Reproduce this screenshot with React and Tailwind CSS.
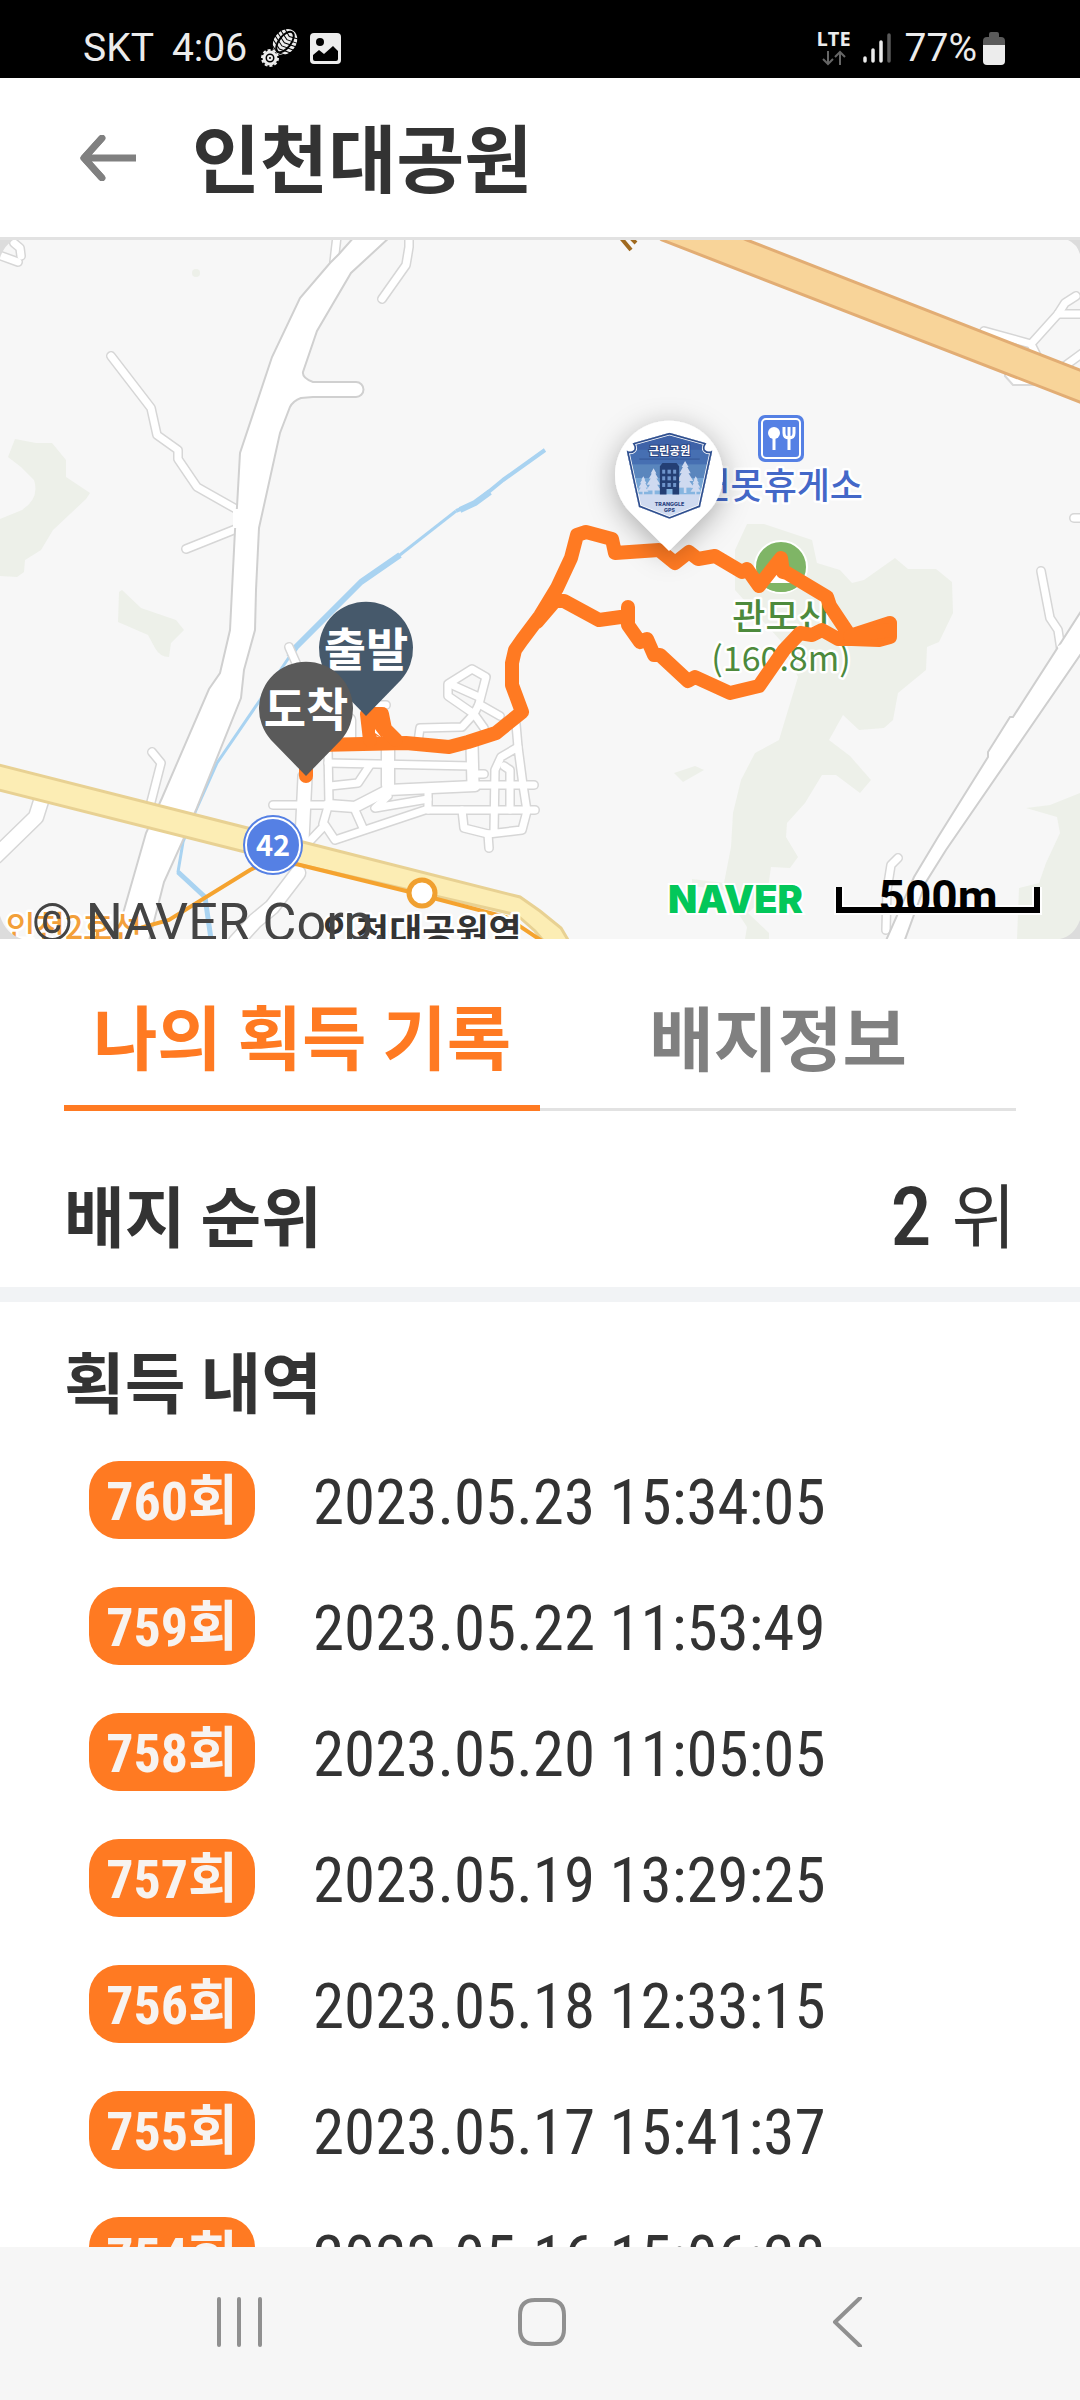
import React from "react";

const ROADS = [
  "M111 356L151 408L157 435L178 450V459L197 487L236 509",
  "M236 529L186 549",
  "M337 236L334 262",
  "M409 236V247L406 265L382 299",
  "M14 243L20 248L21 256",
  "M-4 254L18 262",
  "M152 752L161 763L151 802",
  "M1041 571L1050 618L1058 630L1061 650",
  "M898 858L891 865L887 890L886 930",
  "M984 331L1031 344L1058 314L1065 303L1076 296",
  "M1058 314H1084",
  "M1031 344L1038 358",
  "M1062 368L1084 352",
  "M1074 518H1084",
];

const WIDE_ROADS = [
  "M42 798L36 817L-4 856",
  "M298 873L272 907L255 921L236 942",
];

const STREETS = [
  { d: "M305 777L302 840", w: 13 },
  { d: "M388 745V785", w: 12 },
  { d: "M472 745L473 785", w: 11 },
  { d: "M349 720V738", w: 12 },
  { d: "M328 805L355 807L388 790L475 786", w: 10 },
  { d: "M289 647L300 672", w: 7 },
  { d: "M273 805H328", w: 7 },
  { d: "M328 750L329 803L323 824", w: 7 },
  { d: "M328 763L472 766", w: 7 },
  { d: "M330 786L358 783L370 765", w: 7 },
  { d: "M308 843L325 825L335 840L428 809", w: 7 },
  { d: "M355 810L363 828", w: 7 },
  { d: "M388 796L375 808L428 799", w: 7 },
  { d: "M428 790V810", w: 7 },
  { d: "M428 810H535", w: 7 },
  { d: "M475 785H534", w: 7 },
  { d: "M473 774H484", w: 7 },
  { d: "M462 810L464 828L488 834L522 830L527 811L523 785L518 747L501 757L495 770L494 832", w: 7 },
  { d: "M488 834L489 848", w: 7 },
  { d: "M510 810V770L504 766", w: 7 },
  { d: "M472 669L486 677L479 704L474 714L448 696V684Z", w: 7 },
  { d: "M450 684L479 697", w: 7 },
  { d: "M418 742L420 728L462 727L474 714L484 728", w: 7 },
  { d: "M479 704L500 716", w: 7 },
  { d: "M516 724L518 747", w: 7 },
  { d: "M368 705H386", w: 7 },
];

const ROUTE =
  "M306 776V762L318 745L363 744L406 743L449 747L468 742L496 733L522 712L512 685V663L515 650L522 640L540 616L557 588L571 558L577 535L586 532L612 539L615 553L659 550L675 563L689 552L698 559L715 556L742 572L747 569L759 586L781 558L783 572L787 573L827 597L830 606L850 636L890 623V637L879 640L852 639H838L822 630L812 635L800 633L784 650L759 686L730 693L695 677L688 681L660 655H654L647 639L640 642L628 625V607V616L599 620L564 601H555L537 622";

function RoadSet({ roads }) {
  return (
    <g fill="none" strokeLinecap="round" strokeLinejoin="round">
      {roads.map(({ d, w }) => (
        <path key={d} d={d} stroke="#d6d6d6" strokeWidth={w + 3} />
      ))}
      {roads.map(({ d, w }) => (
        <path key={d} d={d} stroke="#ffffff" strokeWidth={w} />
      ))}
    </g>
  );
}

function Tree({ x, y, s }) {
  return (
    <path
      transform={`translate(${x} ${y}) scale(${s})`}
      d="M0 0L8 14H5L13 28H8L19 46H10L21 62H3V74H-3V62H-21L-10 46H-19L-8 28H-13L-5 14H-8Z"
      fill="#cfdaf0"
    />
  );
}

function ParkBadge() {
  const shield =
    "M209 69L320 100Q308 118 320 124Q330 128 338 122L301 292L209 328L117 292L80 122Q88 128 98 124Q110 118 98 100Z";
  return (
    <svg x="626" y="432" width="87" height="88" viewBox="78 67 262 264">
      <defs>
        <clipPath id="shield">
          <path d={shield} />
        </clipPath>
      </defs>
      <g clipPath="url(#shield)">
        <rect x="70" y="60" width="280" height="280" fill="#3e62a8" />
        <rect x="70" y="120" width="280" height="46" fill="#466fb2" />
        <rect x="70" y="164" width="280" height="40" fill="#5a86bd" />
        <rect x="70" y="204" width="280" height="30" fill="#73a3d3" />
        <rect x="70" y="234" width="280" height="22" fill="#86b5e0" />
        <rect x="70" y="254" width="280" height="90" fill="#cfdaf0" />
        <Tree x={130} y={200} s={0.75} />
        <Tree x={161} y={176} s={1.08} />
        <Tree x={256} y={154} s={1.3} />
        <Tree x={288} y={200} s={0.75} />
        <path d="M180 170L188 160H230L238 170V255H218V238H200V255H180Z" fill="#243f74" />
        <g fill="#6f95cb">
          {[180, 200, 220].map((y) => (
            <React.Fragment key={y}>
              <rect x="187" y={y} width="9" height="12" />
              <rect x="203" y={y} width="10" height="12" />
              <rect x="220" y={y} width="9" height="12" />
            </React.Fragment>
          ))}
        </g>
        <path d="M118 148H300" stroke="#2b4a86" strokeWidth="2" />
        <path d={shield} fill="none" stroke="#ffffff" strokeWidth="15" />
        <path d={shield} fill="none" stroke="#2f4f8f" strokeWidth="10" />
      </g>
      <text
        x="209" y="136" textAnchor="middle" fontSize="34" fontWeight="700"
        fill="#ffffff" stroke="#2b4581" strokeWidth="6" paintOrder="stroke"
        fontFamily="'Noto Sans CJK KR', sans-serif"
      >
        근린공원
      </text>
      <g fontFamily="Inter, sans-serif" fontWeight="800" fontSize="16" fill="#2b4581" textAnchor="middle">
        <text x="209" y="290">TRANGGLE</text>
        <text x="209" y="306">GPS</text>
      </g>
    </svg>
  );
}

function Pin({ x, y, color, label }) {
  return (
    <g transform={`translate(${x} ${y})`}>
      <path d="M0 0L-35 -36A47 47 0 1 1 35 -36Z" fill={color} />
      <text
        y="-50" textAnchor="middle" fontSize="46" fontWeight="700" fill="#ffffff"
        fontFamily="'Noto Sans CJK KR', sans-serif"
      >
        {label}
      </text>
    </g>
  );
}

function RouteMap() {
  return (
    <svg
      viewBox="0 240 1080 699"
      className="block w-full bg-[#f7f7f7]"
      role="img"
      aria-label="인천대공원 이동 경로 지도"
      fontFamily="'Noto Sans CJK KR', sans-serif"
    >
      <defs>
        <filter id="shadow" x="-60%" y="-60%" width="220%" height="220%">
          <feDropShadow dx="0" dy="6" stdDeviation="14" floodColor="#000000" floodOpacity="0.3" />
        </filter>
      </defs>
      <g fill="#edf0e9">
        <path d="M15 439L36 443H52L66 460V477L90 493L86 499L53 530L41 550L25 560L24 572L17 577L0 576V519L22 510Q40 498 34 480L21 467L8 457Z" />
        <path d="M119 592L122 590L141 608L176 620L184 630L171 643L169 657Q160 657 155 648L148 635L118 622Z" />
        <circle cx="196" cy="273" r="4" />
        <path d="M747 524H764L812 540L817 563L840 570L852 583L864 580L895 558L908 569H936L952 582L953 613L939 642L927 647L926 670L898 693L893 720L884 728L859 730L843 715L829 740L850 756L871 780L860 793L836 775H822L805 803L787 823L786 837L798 857L790 868L771 867L767 895L748 913L769 933V939H745L747 927L738 913L724 890L692 886V879L724 883L731 847L733 813L741 780L755 753L779 740L798 677L780 640L735 590V550Z" />
        <path d="M674 773L683 782L704 770L695 766Z" />
        <path d="M1080 793L1050 805L1026 808L1057 817L1060 833L1046 863L1039 883L1019 888L1017 939H1080Z" />
      </g>
      <g fill="none" stroke="#a9d3f1" strokeLinejoin="round">
        <path d="M545 450L503 480L475 503L456 511" strokeWidth="4" />
        <path d="M490 492L475 503L460 510" strokeWidth="6" />
        <path d="M456 511L396 558" strokeWidth="3" />
        <path d="M400 555L361 582L296 647L289 657" strokeWidth="6" />
        <path d="M296 647L269 687L217 763L196 810L183 842L178 872L205 897L211 939" strokeWidth="3" />
        <path d="M178 872L205 897L211 939" strokeWidth="5" />
      </g>
      <RoadSet roads={WIDE_ROADS.map((d) => ({ d, w: 14 }))} />
      <RoadSet roads={STREETS} />
      <RoadSet roads={ROADS.map((d) => ({ d, w: 7 }))} />
      <path
        d="M355 236L339 254L330 263L300 298L272 357L240 453L237 507L235 530L232 590L230 630L220 673L209 689L162 798L146 833L122 917L115 945H148L164 882L184 838L196 810L241 698L244 670L255 630L256 590L259 528L280 433L290 407Q293 401 301 398L313 397H356A7.500 7.500 0 0 0 356 382H313Q302 378 303 372L317 331L351 273L391 236Z"
        fill="#ffffff" stroke="#d0d0d0" strokeWidth="2"
      />
      <path d="M1005 372V376L1013 385H1040Z" fill="#ffffff" stroke="#d9d9d9" strokeWidth="2" />
      <path
        d="M1085 605L1013 717H1010L988 752V757L938 837L914 877L884 945H903L926 882L946 850L1085 648Z"
        fill="#ffffff" stroke="#cfcfcf" strokeWidth="2"
      />
      <path d="M236 509V528M1060 645L1063 650" stroke="#ffffff" strokeWidth="6" />
      <path d="M662 240L655 235H735L747 240L1085 372V404Z" fill="#f8d499" stroke="#e2ad74" strokeWidth="3" />
      <path d="M621 238L631 250M631 238L636 243" stroke="#a06a20" strokeWidth="4" />
      <path
        d="M-5 764L520 897L540 911L561 928L571 945H547L535 931L517 915L241 851L-5 789Z"
        fill="#fcedb4" stroke="#e8d193" strokeWidth="3"
      />
      <path
        d="M140 928L169 920L250 870Q272 858 296 864L410 892L506 917L545 943"
        fill="none" stroke="#f5a32f" strokeWidth="4"
      />
      <circle cx="422" cy="893" r="13" fill="#ffffff" stroke="#f0a030" strokeWidth="5" />

      <g stroke="#ffffff" strokeWidth="5" strokeLinejoin="round" paintOrder="stroke">
        <text x="6" y="939" fontSize="32" fontWeight="500" fill="#f3a03a">인천2호선</text>
        <text x="323" y="945" fontSize="36" fontWeight="700" fill="#333333">인천대공원역</text>
        <text x="863" y="499" textAnchor="end" fontSize="36" fontWeight="500" fill="#4468c8">연못휴게소</text>
        <text x="782" y="630" textAnchor="middle" fontSize="36" fontWeight="500" fill="#4d8a3c">관모산</text>
        <text x="781" y="671" textAnchor="middle" fontSize="34" fill="#4d8a3c">(160.8m)</text>
      </g>

      <circle cx="273" cy="845" r="30" fill="#5580e4" />
      <circle cx="273" cy="845" r="27" fill="none" stroke="#ffffff" strokeWidth="2" />
      <text x="273" y="856" textAnchor="middle" fontSize="29" fontWeight="700" fill="#ffffff">42</text>

      <rect x="758" y="415" width="46" height="47" rx="7" fill="#5580e4" />
      <rect x="762" y="419" width="38" height="39" rx="4" fill="none" stroke="#ffffff" strokeWidth="2" />
      <circle cx="774" cy="433" r="6" fill="#ffffff" />
      <path d="M774 437V450M789 437V450M784 427V433Q784 438 789 438Q794 438 794 433V427M789 427V438" fill="none" stroke="#ffffff" strokeWidth="3" />

      <circle cx="781" cy="567" r="26" fill="#7fb566" stroke="#ffffff" strokeWidth="2" />
      <path d="M781 554L799 583H763Z" fill="#ffffff" />
      <path d="M763 583H799L806 576Q798 592 781 592Q768 592 759 582Z" fill="#7fb566" />

      <g fill="none" stroke="#ff7a22" strokeWidth="14" strokeLinecap="round" strokeLinejoin="round">
        <path d={ROUTE} />
        <path d="M367 714L370 740M373 714H382L385 729L396 740M377 714L381 730M850 636L890 630" />
      </g>
      <path d="M375 729L381 737L375 733Z" fill="#ffffff" />

      <path d="M669 551L630 512A54 54 0 1 1 708 512Z" fill="#ffffff" filter="url(#shadow)" />
      <ParkBadge />
      <Pin x={366} y={716} color="#46596b" label="출발" />
      <Pin x={306} y={776} color="#5a5a5a" label="도착" />

      <text x="32" y="940" fontSize="52" fill="#444444" fontFamily="Roboto, sans-serif">© NAVER Corp.</text>
      <text
        x="668" y="913" fontSize="38" fontWeight="900" fill="#03c75a" stroke="#ffffff" strokeWidth="4"
        paintOrder="stroke" fontFamily="Inter, sans-serif"
      >
        NAVER
      </text>
      <path d="M839 887V910H1037V887" fill="none" stroke="#ffffff" strokeWidth="10" />
      <text x="938" y="913" textAnchor="middle" fontSize="46" fontWeight="700" fill="#000000" fontFamily="Roboto, sans-serif">500m</text>
      <path d="M839 887V910H1037V887" fill="none" stroke="#000000" strokeWidth="6" />
      <path d="M0 240H13Q3 247 0 258ZM1080 240H1068Q1077 244 1080 254ZM0 916Q6 934 22 939H0ZM1080 920Q1074 936 1060 939H1080Z" fill="#dcdcdc" />
    </svg>
  );
}

function StatusBar() {
  return (
    <div className="flex h-[78px] shrink-0 items-center bg-black pr-[75px] pl-[83px] pt-[18px] text-[39px] leading-[60px] text-[#ececec] font-['Roboto',sans-serif]">
      <span>SKT</span>
      <span className="ml-[18px]">4:06</span>
      <svg className="ml-[14px] h-[38px] w-[38px]" viewBox="0 0 38 38" fill="none">
        <g transform="rotate(38 24 13)">
          <ellipse cx="24" cy="13" rx="11" ry="14" fill="#ececec" />
          <ellipse cx="24" cy="13" rx="6" ry="12" stroke="#000000" strokeWidth="2" />
          <path
            d="M12 6L24 10L36 6M12 10L24 14L36 10M12 14L24 18L36 14M12 18L24 22L36 18M12 22L24 26L36 22M14 2L24 6L34 2"
            stroke="#000000" strokeWidth="1"
          />
        </g>
        <circle cx="9" cy="29" r="6" stroke="#ececec" strokeWidth="3" />
        <circle cx="9" cy="29" r="8" stroke="#ececec" strokeWidth="2" strokeDasharray="3 2" />
        <circle cx="9" cy="29" r="2" stroke="#ececec" strokeWidth="2" />
      </svg>
      <svg className="ml-[11px] h-[31px] w-[31px]" viewBox="0 0 31 31">
        <rect width="31" height="31" rx="4" fill="#ececec" />
        <circle cx="10" cy="9" r="4" fill="#000000" />
        <path d="M3 26V22L9 17L14 21L23 13L28 18V26Q28 28 26 28H5Q3 28 3 26Z" fill="#000000" />
      </svg>
      <div className="ml-auto flex flex-col items-center">
        <span className="text-[20px] leading-[16px] font-bold text-[#ececec] font-['Open_Sans',sans-serif]">LTE</span>
        <svg className="mt-[3px] h-[16px] w-[24px]" viewBox="0 0 24 16" fill="none" stroke="#666666" strokeWidth="2">
          <path d="M6 1V14M1 9L6 14L11 9M18 15V2M13 7L18 2L23 7" />
        </svg>
      </div>
      <svg className="ml-[12px] h-[30px] w-[28px]" viewBox="0 0 28 30" strokeWidth="3.500" strokeLinecap="round">
        <path d="M2 25V28M10 17V28M18 9V28" stroke="#ececec" />
        <path d="M26 2V28" stroke="#5a5a5a" />
      </svg>
      <span className="ml-[14px]">77%</span>
      <svg className="ml-[6px] h-[33px] w-[22px]" viewBox="0 0 22 33">
        <path d="M6 5V2Q6 0 8 0H14Q16 0 16 2V5H18Q22 5 22 9V14H0V9Q0 5 4 5Z" fill="#5a5a5a" />
        <path d="M0 13H22V29Q22 33 18 33H4Q0 33 0 29Z" fill="#ececec" />
      </svg>
    </div>
  );
}

const RECORDS = [
  ["760회", "2023.05.23 15:34:05"],
  ["759회", "2023.05.22 11:53:49"],
  ["758회", "2023.05.20 11:05:05"],
  ["757회", "2023.05.19 13:29:25"],
  ["756회", "2023.05.18 12:33:15"],
  ["755회", "2023.05.17 15:41:37"],
  ["754회", "2023.05.16 15:06:28"],
];

export default function App() {
  return (
    <div className="flex h-screen flex-col overflow-hidden bg-white text-[#333333] font-['Noto_Sans_CJK_KR',sans-serif]">
      <StatusBar />
      <header className="flex h-[162px] shrink-0 items-center border-b-[3px] border-[#e2e2e2] px-20">
        <button type="button" aria-label="뒤로" className="shrink-0">
          <svg className="h-[46px] w-[56px]" viewBox="0 0 56 46" fill="none" stroke="#808080" strokeWidth="7" strokeLinecap="round" strokeLinejoin="round">
            <path d="M22 3L4 23L22 43M4 23H56" strokeLinecap="butt" />
            <path d="M22 3L4 23L22 43" />
          </svg>
        </button>
        <h1 className="ml-[56px] pb-[6px] text-[74px] leading-[100px] font-bold">인천대공원</h1>
      </header>
      <div className="shrink-0">
        <RouteMap />
      </div>
      <main className="flex min-h-0 flex-1 flex-col overflow-hidden">
        <div role="tablist" className="mx-16 flex h-[172px] shrink-0 text-[70px] leading-[100px] font-bold">
          <button type="button" role="tab" aria-selected="true" className="flex-1 border-b-[6px] border-[#ff7a22] pt-[26px] text-[#ff7a22]">
            나의 획득 기록
          </button>
          <button type="button" role="tab" aria-selected="false" className="flex-1 border-b-[3px] border-[#e2e2e2] pt-[24px] text-[#808080]">
            배지정보
          </button>
        </div>
        <section className="flex h-[191px] shrink-0 items-center justify-between border-b-[15px] border-[#f1f3f5] pt-[28px] pr-[64px] pl-16">
          <h2 className="text-[66px] leading-[90px] font-bold">배지 순위</h2>
          <p className="flex items-center gap-5 text-[70px] leading-[90px]">
            <span className="pt-2 text-[82px] font-medium font-['Roboto_Condensed',Roboto,sans-serif]">2</span> 위
          </p>
        </section>
        <section className="pt-[32px]">
          <h2 className="pl-16 text-[66px] leading-[90px] font-bold">획득 내역</h2>
          <ul className="mt-[37px] flex flex-col gap-12 pl-[89px]">
            {RECORDS.map(([count, date]) => (
              <li key={count} className="flex h-[78px] items-center gap-[58px]">
                <span className="flex h-[78px] w-[166px] items-center justify-center rounded-[30px] bg-[#ff7a22] pt-1 text-[54px] leading-[78px] font-bold text-[#f7f3f0] font-['Roboto_Condensed',Roboto,'Noto_Sans_CJK_KR',sans-serif]">
                  {count}
                </span>
                <time className="pt-[6px] text-[63px] leading-[78px] font-['Roboto_Condensed',Roboto,sans-serif]">{date}</time>
              </li>
            ))}
          </ul>
        </section>
      </main>
      <nav className="flex h-[153px] shrink-0 items-center justify-center gap-[253px] bg-[#f6f6f6] pb-[3px] pl-1">
        {[
          ["최근 앱", "M5 2V48M25 2V48M46 2V48"],
          ["홈", "M18 3H32Q47 3 47 18V32Q47 47 32 47H18Q3 47 3 32V18Q3 3 18 3Z"],
          ["뒤로 가기", "M40 1L15 25L40 49"],
        ].map(([label, d]) => (
          <button key={label} type="button" aria-label={label}>
            <svg className="h-[50px] w-[50px]" viewBox="0 0 50 50" fill="none" stroke="#909090" strokeWidth="4" strokeLinecap="round" strokeLinejoin="round">
              <path d={d} />
            </svg>
          </button>
        ))}
      </nav>
    </div>
  );
}
